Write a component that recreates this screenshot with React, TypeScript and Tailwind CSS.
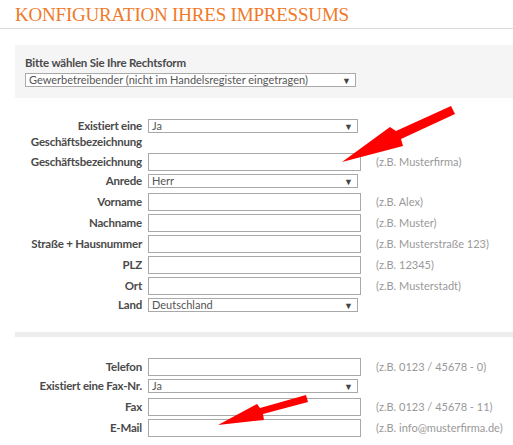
import React from "react";

const font = { fontFamily: "Lato, 'Liberation Sans', sans-serif" };

function Select({ value, w = "w-[210px]" }: { value: string; w?: string }) {
  return (
    <div className={`relative h-[14px] ${w} border border-[#a9a9a9] bg-white flex items-center pl-[3px] text-[11px] leading-[12px] text-[#555]`}>
      <span>{value}</span>
      <span className="absolute right-[4px] top-[1px] text-[9px] leading-[11px] text-[#444]">▼</span>
    </div>
  );
}

function Input() {
  return <div className="h-[18px] w-[213px] border border-[#a9a9a9] bg-white" />;
}

function Row({
  label,
  kind,
  value,
  hint,
}: {
  label: React.ReactNode;
  kind: "input" | "select";
  value?: string;
  hint?: string;
}) {
  const isSel = kind === "select";
  return (
    <div className={`flex items-center ${isSel ? "h-[14px] mb-[5px]" : "h-[18px] mb-[3px]"}`}>
      <div className="w-[127px] text-right font-bold text-[11.5px] tracking-[-0.2px] leading-[16px] text-[#4a4a4a] whitespace-nowrap">
        {label}
      </div>
      <div className="ml-[6px]">{isSel ? <Select value={value || ""} /> : <Input />}</div>
      {hint && <div className="ml-[15px] text-[11px] text-[#999] whitespace-nowrap">{hint}</div>}
    </div>
  );
}

export default function App() {
  return (
    <div className="relative w-[513px] h-[445px] overflow-hidden bg-white" style={font}>
      <h1
        className="pl-[15px] pt-[4px] h-[28px] text-[19px] leading-[22px] tracking-[-0.2px] text-[#f07a2a]"
        style={{ fontFamily: "'Liberation Serif', serif" }}
      >
        KONFIGURATION IHRES IMPRESSUMS
      </h1>
      <div className="h-px bg-[#dcdcdc]" />
      <div className="ml-[15px] mt-[16px] h-[53px] bg-[#f5f5f5] pl-[10px] pt-[10px]">
        <div className="font-bold text-[11.5px] tracking-[-0.2px] leading-[16px] text-[#4a4a4a]">Bitte wählen Sie Ihre Rechtsform</div>
        <div className="mt-[2px]">
          <Select value="Gewerbetreibender (nicht im Handelsregister eingetragen)" w="w-[331px]" />
        </div>
      </div>

      <div className="pl-[15px] pt-[20px] pb-[5px]">
        <div className="flex items-start h-[32px] mb-[3px]">
          <div className="w-[127px] text-right font-bold text-[11.5px] tracking-[-0.2px] leading-[16px] text-[#4a4a4a]">
            Existiert eine
            <br />
            Geschäftsbezeichnung
          </div>
          <div className="ml-[6px] mt-[1px]">
            <Select value="Ja" />
          </div>
        </div>
        <Row label="Geschäftsbezeichnung" kind="input" hint="(z.B. Musterfirma)" />
        <Row label="Anrede" kind="select" value="Herr" />
        <Row label="Vorname" kind="input" hint="(z.B. Alex)" />
        <Row label="Nachname" kind="input" hint="(z.B. Muster)" />
        <Row label="Straße + Hausnummer" kind="input" hint="(z.B. Musterstraße 123)" />
        <Row label="PLZ" kind="input" hint="(z.B. 12345)" />
        <Row label="Ort" kind="input" hint="(z.B. Musterstadt)" />
        <Row label="Land" kind="select" value="Deutschland" />
      </div>

      <div className="ml-[15px] mt-[10px] h-[5px] bg-[#ededed]" />

      <div className="pl-[15px] pt-[21px]">
        <Row label="Telefon" kind="input" hint="(z.B. 0123 / 45678 - 0)" />
        <Row label="Existiert eine Fax-Nr." kind="select" value="Ja" />
        <Row label="Fax" kind="input" hint="(z.B. 0123 / 45678 - 11)" />
        <Row label="E-Mail" kind="input" hint="(z.B. info@musterfirma.de)" />
      </div>

      <svg className="absolute left-0 top-0 pointer-events-none" width="513" height="445" viewBox="0 0 513 445">
        <polygon fill="#ff0000" points="451,106 455,114 401,139 403,146 342,162 390,127 396,131" />
        <polygon fill="#ff0000" points="306,395 308,402 263,414 264,420 218,425 257,404 260,408" />
      </svg>
    </div>
  );
}
